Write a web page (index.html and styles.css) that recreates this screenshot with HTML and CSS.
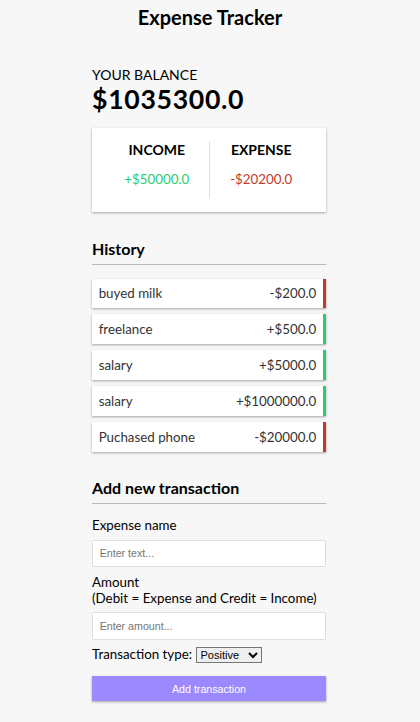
FILE: index.html
```html
<!DOCTYPE html>
<html lang="en">
<head>
<meta charset="UTF-8">
<title>Expense Tracker</title>
<link rel="stylesheet" href="styles.css">
</head>
<body>
<h1 class="title">Expense Tracker</h1>
<div class="container">
  <h4 class="balance-label">Your Balance</h4>
  <h1 class="balance">$1035300.0</h1>

  <div class="inc-exp">
    <div class="inc-exp-col divider">
      <h4 class="inc-exp-title">Income</h4>
      <p class="money plus">+$50000.0</p>
    </div>
    <div class="inc-exp-col">
      <h4 class="inc-exp-title">Expense</h4>
      <p class="money minus">-$20200.0</p>
    </div>
  </div>

  <h3 class="section-title history-title">History</h3>
  <ul class="list">
    <li class="item minus"><span>buyed milk</span><span>-$200.0</span></li>
    <li class="item plus"><span>freelance</span><span>+$500.0</span></li>
    <li class="item plus"><span>salary</span><span>+$5000.0</span></li>
    <li class="item plus"><span>salary</span><span>+$1000000.0</span></li>
    <li class="item minus"><span>Puchased phone</span><span>-$20000.0</span></li>
  </ul>

  <h3 class="section-title">Add new transaction</h3>
  <form class="form">
    <div class="form-control">
      <label class="label" for="text">Expense name</label>
      <input class="field" type="text" id="text" placeholder="Enter text...">
    </div>
    <div class="form-control">
      <label class="label" for="amount">Amount <br>(Debit = Expense and Credit = Income)</label>
      <input class="field" type="text" id="amount" placeholder="Enter amount...">
    </div>
    <div class="form-control">
      <label class="label">Transaction type: <select class="select"><option>Positive</option><option>Negative</option></select></label>
    </div>
    <button class="btn" type="button">Add transaction</button>
  </form>
</div>
</body>
</html>
```
FILE: styles.css
```css
* { box-sizing: border-box; }

body {
  margin: 0;
  background-color: #f7f7f7;
  font-family: Lato, "Noto Sans", sans-serif;
  font-size: 13.33px;
  color: #000;
}

.title {
  margin: 5px 0 0;
  text-align: center;
  font-size: 20px;
  font-weight: 700;
  line-height: normal;
}

.container {
  width: 234px;
  margin: 0 0 0 calc(50% - 118px);
}

.balance-label {
  margin: 36.6px 0 0;
  font-size: 14px;
  font-weight: 400;
  text-transform: uppercase;
  line-height: normal;
}

.balance {
  margin: 0;
  font-size: 26.67px;
  font-weight: 700;
  letter-spacing: 0.67px;
  line-height: normal;
}

.inc-exp {
  display: flex;
  background-color: #fff;
  box-shadow: 0 1px 3px rgba(0,0,0,0.12), 0 1px 2px rgba(0,0,0,0.24);
  padding: 13px;
  margin: 13.3px 0;
}

.inc-exp-col {
  flex: 1;
  text-align: center;
}

.divider { border-right: 1px solid #dedede; }

.inc-exp-title {
  margin: 0;
  font-size: 14px;
  font-weight: 700;
  text-transform: uppercase;
  line-height: normal;
}

.money {
  margin: 12.8px 0 12.5px;
  font-size: 13.33px;
  line-height: normal;
}

.money.plus { color: #2ecc71; }
.money.minus { color: #c0392b; }

.section-title {
  margin: 0;
  padding-bottom: 6px;
  border-bottom: 1px solid #bbb;
  font-size: 16px;
  font-weight: 700;
  line-height: normal;
}

.history-title { margin-top: 27px; }

.list {
  list-style: none;
  padding: 0;
  margin: 13.33px 0 26px;
  display: flex;
  flex-direction: column;
  gap: 6.67px;
}

.item {
  display: flex;
  justify-content: space-between;
  background-color: #fff;
  box-shadow: 0 1px 3px rgba(0,0,0,0.12), 0 1px 2px rgba(0,0,0,0.24);
  color: #333;
  padding: 6.67px;
  line-height: normal;
}

.item.plus { border-right: 3.33px solid #2ecc71; }
.item.minus { border-right: 3.33px solid #c0392b; }

.form { margin-top: 6.67px; }

.label {
  display: inline-block;
  margin: 6.67px 0;
  line-height: normal;
}

.field {
  display: block;
  width: 100%;
  border: 1px solid #dedede;
  border-radius: 1.33px;
  padding: 6.67px;
  font-family: "Liberation Sans", Arial, sans-serif;
  font-size: 10.67px;
  background: #fff;
}

.select {
  font-family: "Liberation Sans", Arial, sans-serif;
  font-size: 11px;
  border-radius: 0;
}

.btn {
  display: block;
  width: 100%;
  margin: 6px 0 20px;
  padding: 6.67px;
  border: 0;
  background-color: #9c88ff;
  color: #fff;
  font-family: "Liberation Sans", Arial, sans-serif;
  font-size: 10.67px;
  box-shadow: 0 1px 3px rgba(0,0,0,0.12), 0 1px 2px rgba(0,0,0,0.24);
}
```
